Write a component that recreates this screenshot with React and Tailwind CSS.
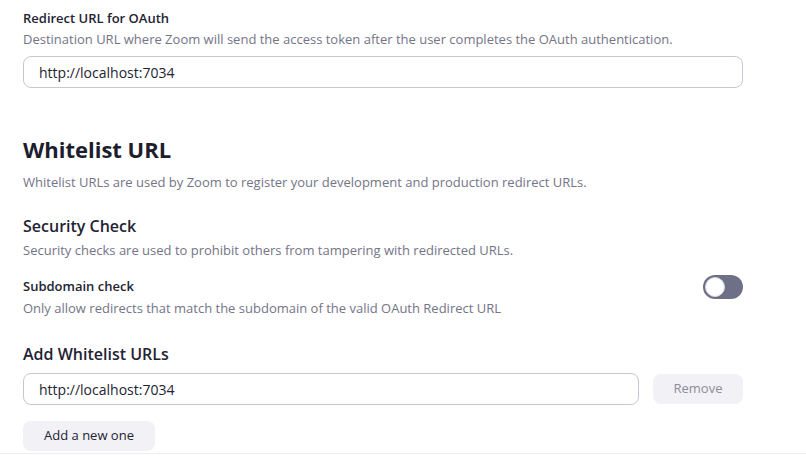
import { useState } from 'react';

export default function App() {
  const [subdomain, setSubdomain] = useState(false);
  const [urls, setUrls] = useState(['http://localhost:7034']);

  return (
    <div className="w-[806px] h-[468px] bg-white overflow-hidden font-['Open_Sans',sans-serif] text-[#232333]">
      <div className="px-[23px] pt-[9px] w-[766px]">
        {/* Redirect URL */}
        <div className="text-[13px] font-semibold leading-[18px]">Redirect URL for OAuth</div>
        <div className="text-[13px] text-[#747487] leading-[18px] mt-[3px]">
          Destination URL where Zoom will send the access token after the user completes the OAuth authentication.
        </div>
        <input
          className="mt-[8px] w-[720px] h-[32px] px-[15px] text-[14px] border border-[#c8c6d6] rounded-[8px] outline-none"
          defaultValue="http://localhost:7034"
        />

        {/* Whitelist */}
        <h2 className="mt-[47px] text-[22px] font-bold leading-[28px] text-[#1d1d2e]">Whitelist URL</h2>
        <div className="text-[13px] text-[#747487] leading-[18px] mt-[10px]">
          Whitelist URLs are used by Zoom to register your development and production redirect URLs.
        </div>

        <h3 className="mt-[24px] text-[16px] font-semibold leading-[22px]">Security Check</h3>
        <div className="text-[13px] text-[#747487] leading-[18px] mt-[4px]">
          Security checks are used to prohibit others from tampering with redirected URLs.
        </div>

        <div className="mt-[18px] flex items-start justify-between w-[720px]">
          <div>
            <div className="text-[13px] font-semibold leading-[18px]">Subdomain check</div>
            <div className="text-[13px] text-[#747487] leading-[18px] mt-[4px]">
              Only allow redirects that match the subdomain of the valid OAuth Redirect URL
            </div>
          </div>
          <button
            onClick={() => setSubdomain(!subdomain)}
            className="mt-[-2px] w-[40px] h-[24px] rounded-full bg-[#6e7087] p-[2px] flex items-center"
          >
            <span className="block w-[20px] h-[20px] rounded-full bg-white border border-[#d6d6df]" />
          </button>
        </div>

        <h3 className="mt-[26px] text-[16px] font-semibold leading-[22px]">Add Whitelist URLs</h3>
        {urls.map((u, i) => (
          <div key={i} className="mt-[8px] flex items-center gap-[14px] w-[720px]">
            <input
              className="w-[616px] h-[32px] px-[15px] text-[14px] border border-[#c8c6d6] rounded-[8px] outline-none"
              defaultValue={u}
            />
            <button className="w-[90px] h-[30px] rounded-[8px] bg-[#f1f1f6] text-[13px] text-[#8c8c9c]">
              Remove
            </button>
          </div>
        ))}
        <button
          onClick={() => setUrls([...urls, ''])}
          className="mt-[16px] w-[132px] h-[30px] rounded-[8px] bg-[#f1f1f6] text-[13px] text-[#232333]"
        >
          Add a new one
        </button>
      </div>
      <div className="mt-[2px] border-t border-[#ededf2]" />
    </div>
  );
}
